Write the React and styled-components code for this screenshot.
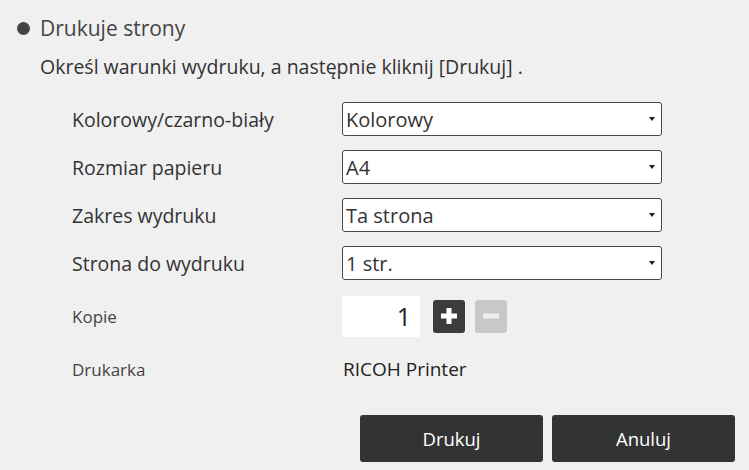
import React from "react";
import styled, { createGlobalStyle } from "styled-components";

const Global = createGlobalStyle`
  html, body {
    margin: 0;
    padding: 0;
    background: #f0f0f0;
  }
  body {
    font-family: "Open Sans", "Noto Sans", sans-serif;
    color: #333;
  }
`;

const App = () => {
  return (
    <>
      <Global />
      <Page>
        <Heading>
          <Bullet />
          Drukuje strony
        </Heading>
        <Intro>Określ warunki wydruku, a następnie kliknij [Drukuj] .</Intro>
        <Form>
          <SelectRow label="Kolorowy/czarno-biały" value="Kolorowy" />
          <SelectRow label="Rozmiar papieru" value="A4" />
          <SelectRow label="Zakres wydruku" value="Ta strona" />
          <SelectRow label="Strona do wydruku" value="1 str." />
          <Row $height={58}>
            <SmallLabel>Kopie</SmallLabel>
            <Copies>
              <CountBox>1</CountBox>
              <StepButton $active>
                <svg width="20" height="20" viewBox="0 0 20 20">
                  <rect x="7.5" y="2" width="5" height="16" fill="#fff" />
                  <rect x="2" y="7.5" width="16" height="5" fill="#fff" />
                </svg>
              </StepButton>
              <StepButton>
                <svg width="20" height="20" viewBox="0 0 20 20">
                  <rect x="2" y="7.5" width="16" height="5" fill="#eee" />
                </svg>
              </StepButton>
            </Copies>
          </Row>
          <Row $height={48}>
            <SmallLabel>Drukarka</SmallLabel>
            <Printer>RICOH Printer</Printer>
          </Row>
        </Form>
        <Actions>
          <ActionButton>Drukuj</ActionButton>
          <ActionButton>Anuluj</ActionButton>
        </Actions>
      </Page>
    </>
  );
};

const SelectRow = ({ label, value }) => (
  <Row $height={48}>
    <Label>{label}</Label>
    <Select>
      <span>{value}</span>
      <Caret />
    </Select>
  </Row>
);

export default App;

const Page = styled.div`
  width: 749px;
  height: 470px;
  box-sizing: border-box;
  padding: 13px 14px 0 16px;
  display: flex;
  flex-direction: column;
`;

const Heading = styled.div`
  display: flex;
  align-items: center;
  gap: 10px;
  font-size: 21px;
  color: #444;
  height: 30px;
`;

const Bullet = styled.span`
  width: 13px;
  height: 13px;
  border-radius: 50%;
  background: #444;
  margin-left: 1px;
`;

const Intro = styled.div`
  margin-top: 10px;
  margin-left: 24px;
  font-size: 19.5px;
  color: #333;
`;

const Form = styled.div`
  margin-top: 15px;
  padding-left: 56px;
  display: flex;
  flex-direction: column;
`;

const Row = styled.div`
  display: grid;
  grid-template-columns: 270px 1fr;
  align-items: center;
  height: ${(p) => p.$height}px;
`;

const Label = styled.div`
  font-size: 19.5px;
  color: #333;
`;

const SmallLabel = styled.div`
  font-size: 17px;
  color: #444;
`;

const Select = styled.div`
  width: 320px;
  height: 34px;
  box-sizing: border-box;
  border: 1px solid #4a4a4a;
  border-radius: 3px;
  background: #fff;
  display: flex;
  align-items: center;
  justify-content: space-between;
  padding: 0 6px 0 3px;
  font-size: 20px;
  color: #333;
`;

const Caret = styled.span`
  width: 0;
  height: 0;
  border-left: 3.5px solid transparent;
  border-right: 3.5px solid transparent;
  border-top: 4px solid #222;
`;

const Copies = styled.div`
  display: flex;
  align-items: center;
  gap: 10px;
`;

const CountBox = styled.div`
  width: 78px;
  height: 41px;
  box-sizing: border-box;
  background: #fff;
  display: flex;
  align-items: center;
  justify-content: flex-end;
  padding-right: 9px;
  font-size: 25px;
  color: #222;
  margin-right: 3px;
`;

const StepButton = styled.div`
  width: 32px;
  height: 33px;
  border-radius: 3px;
  background: ${(p) => (p.$active ? "#3c3c3c" : "#c8c8c8")};
  display: flex;
  align-items: center;
  justify-content: center;
`;

const Printer = styled.div`
  font-size: 19px;
  color: #222;
  padding-left: 1px;
`;

const Actions = styled.div`
  margin-top: 22px;
  display: flex;
  justify-content: flex-end;
  gap: 9px;
`;

const ActionButton = styled.button`
  width: 183px;
  height: 47px;
  border: none;
  border-radius: 3px;
  background: #333;
  color: #fff;
  font-family: "Open Sans", "Noto Sans", sans-serif;
  font-size: 18.5px;
`;
